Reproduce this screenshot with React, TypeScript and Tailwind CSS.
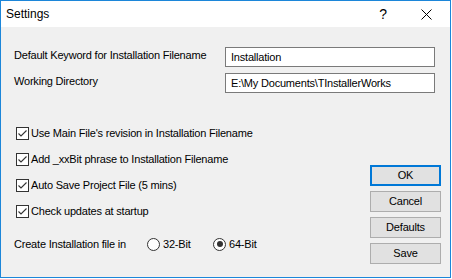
import React from 'react';

const font = { fontFamily: '"Liberation Sans", Arial, sans-serif' };

function CheckRow({ label }: { label: string }) {
  return (
    <div className="flex h-[26px] items-center pl-[15px]">
      <span className="flex h-[13px] w-[13px] items-center justify-center border border-[#333] bg-white">
        <svg width="11" height="11" viewBox="0 0 11 11">
          <path d="M1.5 5.5 L4 8 L9.5 2.5" fill="none" stroke="#333" strokeWidth="1.1" />
        </svg>
      </span>
      <span className="ml-[2px]">{label}</span>
    </div>
  );
}

function Radio({ label, checked }: { label: string; checked?: boolean }) {
  return (
    <div className="flex items-center">
      <span className="flex h-[13px] w-[13px] items-center justify-center rounded-full border border-[#333] bg-white">
        {checked && <span className="h-[6px] w-[6px] rounded-full bg-[#333]" />}
      </span>
      <span className="ml-[3px]">{label}</span>
    </div>
  );
}

function Btn({ label, primary }: { label: string; primary?: boolean }) {
  return (
    <button
      className={
        primary
          ? 'h-[21px] w-[71px] border-2 border-[#0078d7] bg-[#e1e1e1] text-black'
          : 'h-[21px] w-[71px] border border-[#adadad] bg-[#e1e1e1] text-black'
      }
    >
      {label}
    </button>
  );
}

export default function App() {
  return (
    <div className="bg-white">
      <div
        className="flex h-[278px] w-[451px] flex-col whitespace-nowrap border border-[#1c86d9] bg-white text-[11px] tracking-[-0.2px] text-black"
        style={font}
      >
        {/* Title bar */}
        <div className="flex h-[26px] items-center bg-white pl-[5px] text-[12px] tracking-normal">
          <span className="flex-1">Settings</span>
          <span className="mr-[34px] text-[14px]">?</span>
          <svg width="11" height="11" viewBox="0 0 11 11" className="mr-[18px]">
            <path d="M0.5 0.5 L10.5 10.5 M10.5 0.5 L0.5 10.5" stroke="#000" strokeWidth="1" />
          </svg>
        </div>

        {/* Body */}
        <div className="flex flex-1 flex-col bg-[#f0f0f0]">
          <div className="flex flex-col gap-[6px] pl-[13px] pt-[20px]">
            <div className="flex items-center">
              <span className="-mt-[4px] w-[211px]">Default Keyword for Installation Filename</span>
              <div className="flex h-[20px] w-[210px] items-center border border-[#7a7a7a] bg-white pl-[5px]">
                Installation
              </div>
            </div>
            <div className="flex items-center">
              <span className="-mt-[4px] w-[211px]">Working Directory</span>
              <div className="flex h-[20px] w-[210px] items-center border border-[#7a7a7a] bg-white pl-[5px]">
                E:\My Documents\TInstallerWorks
              </div>
            </div>
          </div>

          <div className="flex">
            <div className="flex flex-1 flex-col pt-[27px]">
              <CheckRow label="Use Main File's revision in Installation Filename" />
              <CheckRow label="Add _xxBit phrase to Installation Filename" />
              <CheckRow label="Auto Save Project File (5 mins)" />
              <CheckRow label="Check updates at startup" />
              <div className="mt-[7px] flex h-[26px] items-center pl-[13px]">
                <span className="w-[133px]">Create Installation file in</span>
                <div className="w-[66px]">
                  <Radio label="32-Bit" />
                </div>
                <Radio label="64-Bit" checked />
              </div>
            </div>
            <div className="flex flex-col gap-[5px] pr-[9px] pt-[72px]">
              <Btn label="OK" primary />
              <Btn label="Cancel" />
              <Btn label="Defaults" />
              <Btn label="Save" />
            </div>
          </div>
        </div>
      </div>
    </div>
  );
}
